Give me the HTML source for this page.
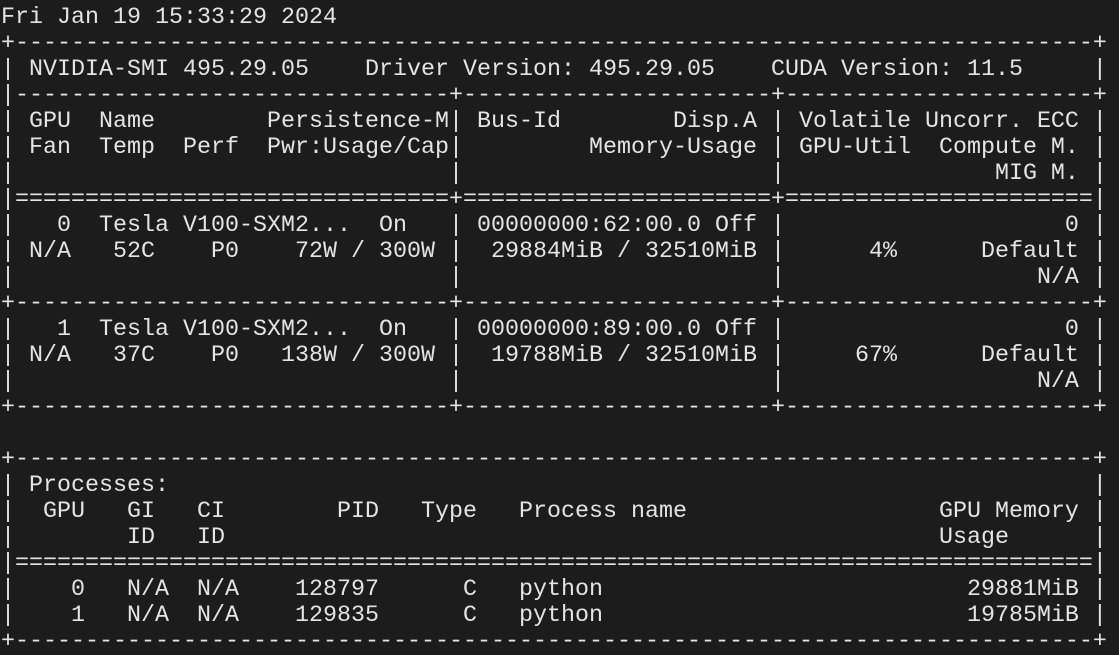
<!DOCTYPE html>
<html><head><meta charset="utf-8"><style>
html,body{margin:0;padding:0;background:#1c1c1c;width:1119px;height:651px;overflow:hidden}
pre{position:absolute;left:1px;top:-21px;margin:0;font-family:"Liberation Mono","DejaVu Sans Mono",monospace;font-size:23.33px;line-height:26px;color:#e4e4e4;white-space:pre;letter-spacing:0}
</style></head><body><pre>
 
Fri Jan 19 15:33:29 2024
+-----------------------------------------------------------------------------+
| NVIDIA-SMI 495.29.05    Driver Version: 495.29.05    CUDA Version: 11.5     |
|-------------------------------+----------------------+----------------------+
| GPU  Name        Persistence-M| Bus-Id        Disp.A | Volatile Uncorr. ECC |
| Fan  Temp  Perf  Pwr:Usage/Cap|         Memory-Usage | GPU-Util  Compute M. |
|                               |                      |               MIG M. |
|===============================+======================+======================|
|   0  Tesla V100-SXM2...  On   | 00000000:62:00.0 Off |                    0 |
| N/A   52C    P0    72W / 300W |  29884MiB / 32510MiB |      4%      Default |
|                               |                      |                  N/A |
+-------------------------------+----------------------+----------------------+
|   1  Tesla V100-SXM2...  On   | 00000000:89:00.0 Off |                    0 |
| N/A   37C    P0   138W / 300W |  19788MiB / 32510MiB |     67%      Default |
|                               |                      |                  N/A |
+-------------------------------+----------------------+----------------------+

+-----------------------------------------------------------------------------+
| Processes:                                                                  |
|  GPU   GI   CI        PID   Type   Process name                  GPU Memory |
|        ID   ID                                                   Usage      |
|=============================================================================|
|    0   N/A  N/A    128797      C   python                          29881MiB |
|    1   N/A  N/A    129835      C   python                          19785MiB |
+-----------------------------------------------------------------------------+
</pre></body></html>
